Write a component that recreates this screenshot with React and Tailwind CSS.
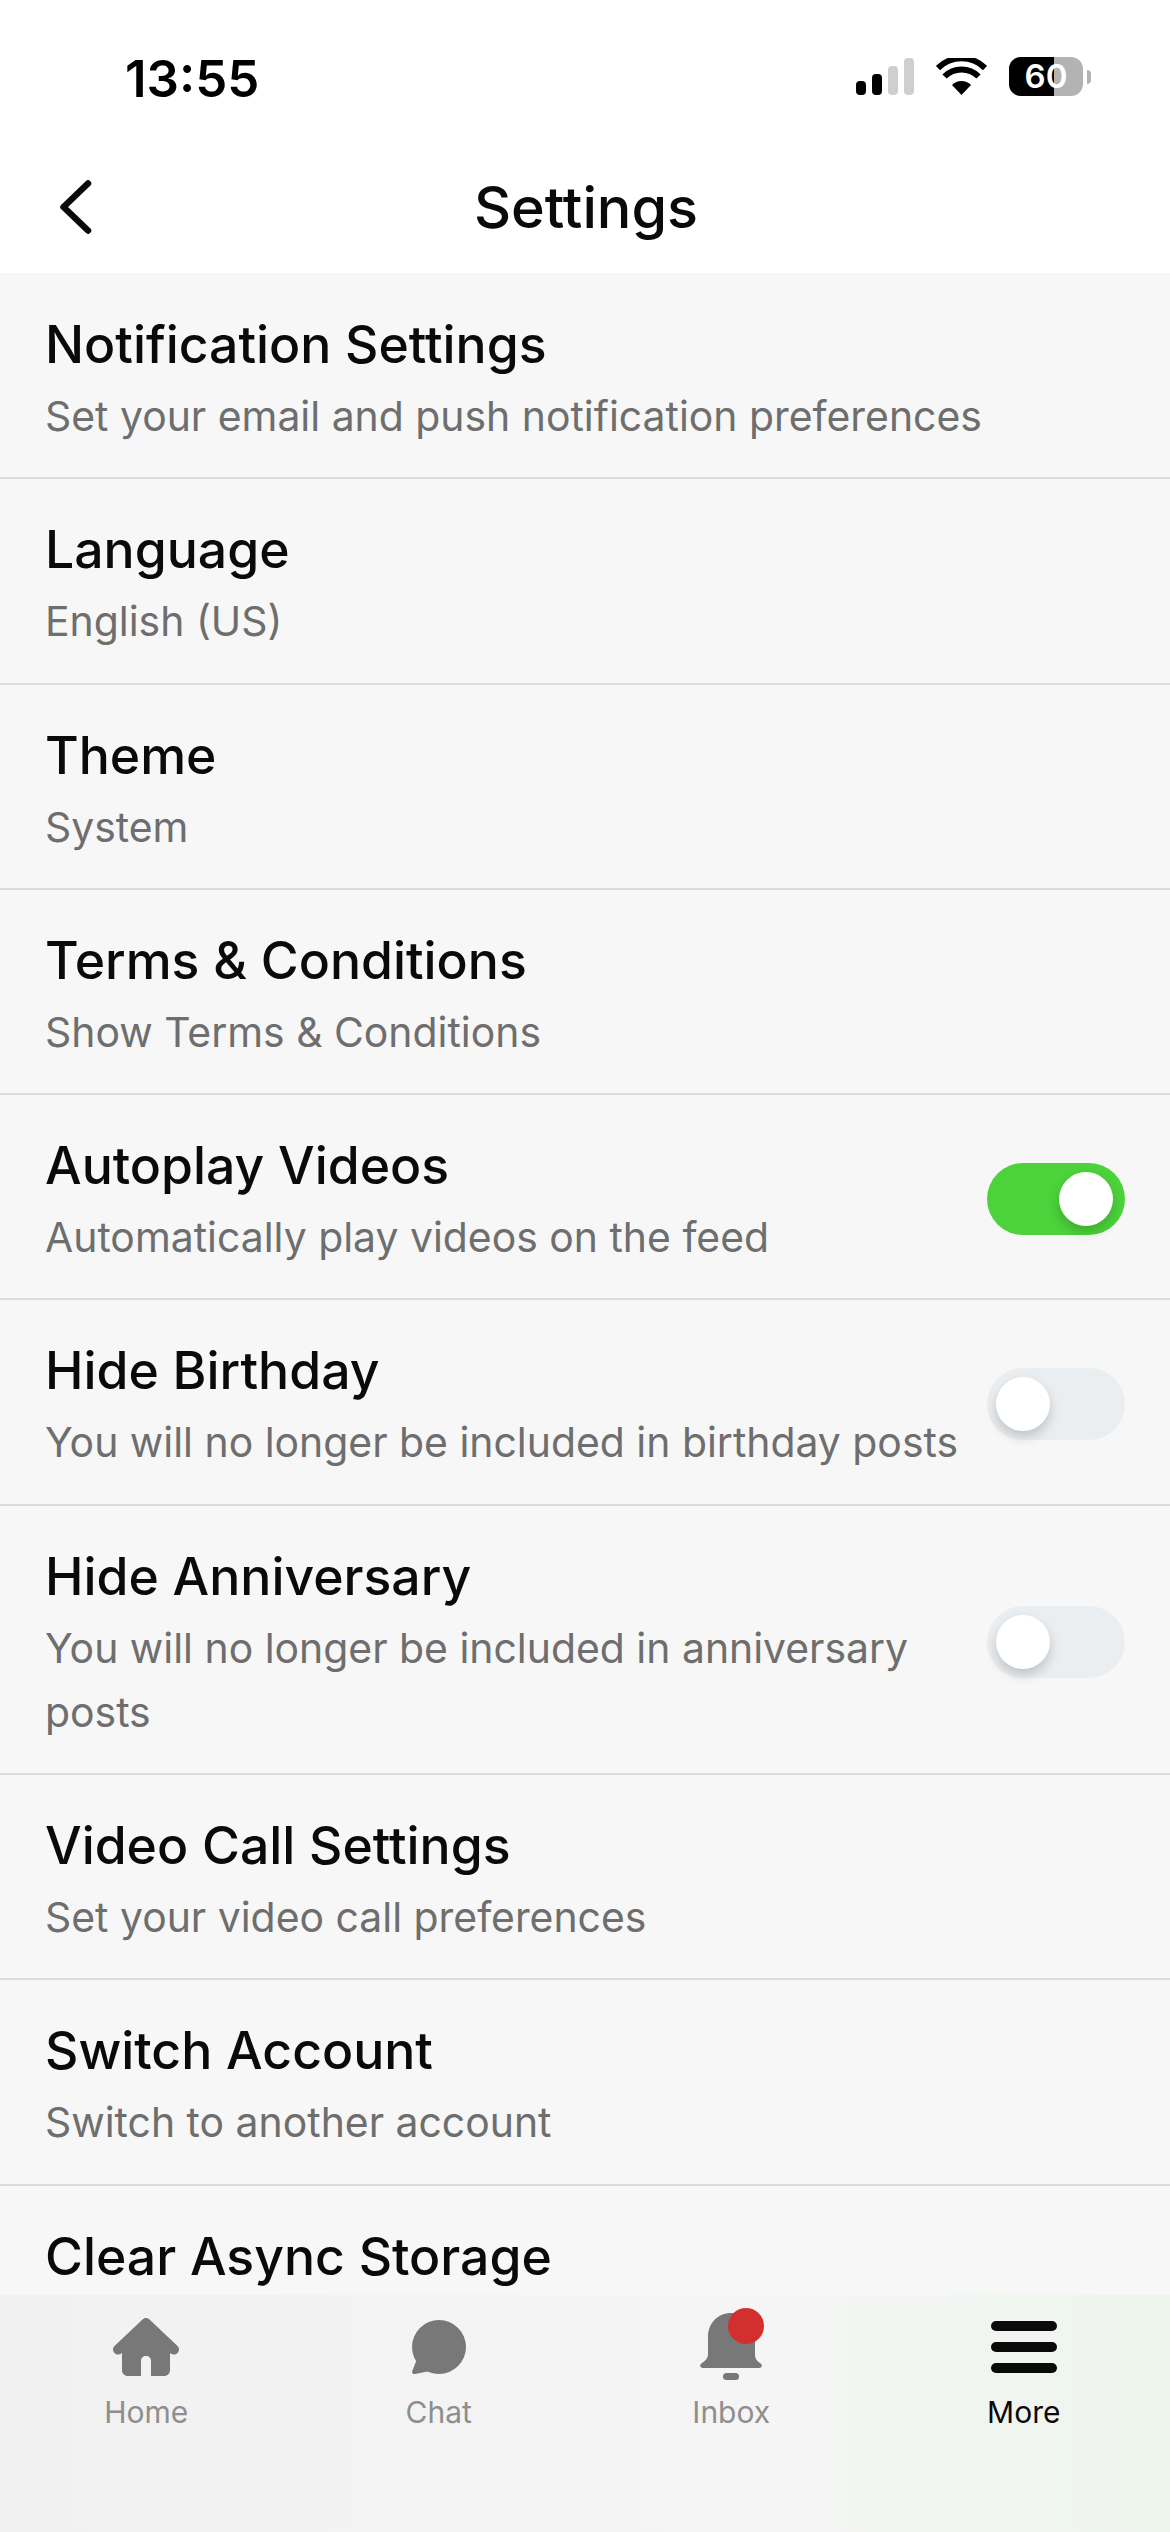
import React from "react";

const rows = [
  { title: "Notification Settings", sub: "Set your email and push notification preferences" },
  { title: "Language", sub: "English (US)" },
  { title: "Theme", sub: "System" },
  { title: "Terms & Conditions", sub: "Show Terms & Conditions" },
  { title: "Autoplay Videos", sub: "Automatically play videos on the feed", toggle: "on" },
  { title: "Hide Birthday", sub: "You will no longer be included in birthday posts", toggle: "off" },
  { title: "Hide Anniversary", sub: "You will no longer be included in anniversary posts", toggle: "off" },
  { title: "Video Call Settings", sub: "Set your video call preferences" },
  { title: "Switch Account", sub: "Switch to another account" },
  { title: "Clear Async Storage", sub: "Clear local storage" },
];

const Toggle = ({ on }) => (
  <div
    className={`flex h-[72px] w-[138px] shrink-0 items-center rounded-full ${
      on ? "justify-end bg-[#4cd23a] pr-[12px]" : "justify-start bg-[#ebeef0] pl-[9px]"
    }`}
  >
    <div className="h-[54px] w-[54px] rounded-full bg-white shadow-[0_6px_12px_rgba(0,0,0,0.18)]" />
  </div>
);

const StatusBar = () => (
  <div className="flex h-[148px] items-start justify-between pl-[125px] pr-[79px] pt-[49px]">
    <span className="text-[51px] font-semibold leading-[60px] text-black">13:55</span>
    <div className="flex items-center pt-[8px]">
      {/* signal */}
      <svg width="58" height="37" viewBox="0 0 58 37">
        <rect x="0" y="23" width="10" height="14" rx="4" fill="#000" />
        <rect x="16" y="16" width="10" height="21" rx="4" fill="#000" />
        <rect x="32" y="8" width="10" height="29" rx="4" fill="#cfcfcf" />
        <rect x="48" y="0" width="10" height="37" rx="4" fill="#cfcfcf" />
      </svg>
      {/* wifi */}
      <svg className="ml-[22px]" width="51" height="37" viewBox="0 0 51 37">
        <path d="M25.5 37 L16 27 A13.5 13.5 0 0 1 35 27 Z" fill="#000" />
        <path d="M8.5 18.5 A24 24 0 0 1 42.5 18.5" fill="none" stroke="#000" strokeWidth="6" />
        <path d="M2 10 A33.5 33.5 0 0 1 49 10" fill="none" stroke="#000" strokeWidth="6" />
      </svg>
      {/* battery */}
      <div className="relative ml-[22px] flex h-[39px] w-[74px] overflow-hidden rounded-[12px] bg-[#b3b3b3]">
        <div className="h-full w-[45px] bg-black" />
        <span className="absolute inset-0 text-center text-[33px] font-semibold leading-[39px] text-white">60</span>
      </div>
      <div className="ml-[4px] h-[14px] w-[4px] rounded-r-full bg-[#b3b3b3]" />
    </div>
  </div>
);

const Header = () => (
  <div className="relative flex h-[125px] items-start justify-center bg-white">
    <svg className="absolute left-[56px] top-[28px]" width="40" height="62" viewBox="0 0 40 62">
      <path d="M32 7.5 L7.5 31 L32 54.5" fill="none" stroke="#0a0a0a" strokeWidth="6.5" strokeLinecap="round" strokeLinejoin="round" />
    </svg>
    <span className="ml-[2px] mt-[27px] text-[57.5px] font-medium leading-[64px] text-[#0a0a0a]">Settings</span>
  </div>
);

const TabLabel = ({ active, className, children }) => (
  <span className={`text-[30px] leading-[34px] ${active ? "text-[#0a0a0a]" : "text-[#8e8e8e]"} ${className}`}>{children}</span>
);

const TabBar = () => (
  <div className="grid h-[237px] shrink-0 grid-cols-4 bg-gradient-to-r from-[#f1f1f1] via-[#f5f5f5] via-65% to-[#eef5ed]">
    <div className="flex flex-col items-center pt-[23px]">
      <svg width="66" height="58" viewBox="0 0 66 58">
        <path d="M33 0 C34.5 0 35.5 .6 36.5 1.6 L64.5 28 C66.5 30 66.5 33 64.5 35 C62.5 37 59.5 37 57 35 L57 52 C57 55.5 54.5 58 51 58 L38 58 L38 43 C38 40 36 38 33 38 C30 38 28 40 28 43 L28 58 L15 58 C11.5 58 9 55.5 9 52 L9 35 C6.5 37 3.5 37 1.5 35 C-.5 33 -.5 30 1.5 28 L29.5 1.6 C30.5 .6 31.5 0 33 0 Z" fill="#787878" />
      </svg>
      <TabLabel className="mt-[19px]">Home</TabLabel>
    </div>
    <div className="flex flex-col items-center pt-[25px]">
      <svg width="54" height="54" viewBox="0 0 54 54">
        <circle cx="27" cy="27" r="27" fill="#787878" />
        <path d="M5 39 L.3 51 C-.4 53 1 54.4 3 54 L18 51 Z" fill="#787878" />
      </svg>
      <TabLabel className="mt-[21px]">Chat</TabLabel>
    </div>
    <div className="flex flex-col items-center pt-[13px]">
      <div className="relative h-[72px] w-[62px]">
        <svg className="mt-[5px]" width="62" height="67" viewBox="0 0 62 67">
          <path d="M31 0 C18 0 8 10 8 24 L8 41 C8 45 6 47 2 50 C-1 52 0 55 3 55 L59 55 C62 55 63 52 60 50 C56 47 55 45 55 41 L55 24 C55 10 44 0 31 0 Z" fill="#787878" />
          <rect x="23" y="60" width="16" height="7" rx="3.5" fill="#787878" />
        </svg>
        {/* unread dot */}
        <div className="absolute left-[28px] top-0 h-[36px] w-[36px] rounded-full bg-[#d32f2f]" />
      </div>
      <TabLabel className="mt-[15px]">Inbox</TabLabel>
    </div>
    <div className="flex flex-col items-center pt-[26px]">
      <div className="flex w-[66px] flex-col gap-[11px]">
        <div className="h-[10px] rounded-full bg-[#0a0a0a]" />
        <div className="h-[10px] rounded-full bg-[#0a0a0a]" />
        <div className="h-[10px] rounded-full bg-[#0a0a0a]" />
      </div>
      <TabLabel active className="mt-[22px]">More</TabLabel>
    </div>
  </div>
);

const SettingRow = ({ row }) => (
  <div className="flex items-center justify-between gap-[20px] border-b-[2px] border-[#dcdcdc] pb-[29.3px] pl-[45px] pr-[45px] pt-[34px]">
    <div className="min-w-0 flex-1">
      <div className="text-[51.7px] font-medium leading-[72px] text-[#0a0a0a]">{row.title}</div>
      <div className="mt-[4px] text-[40.9px] leading-[64px] text-[#6e6e6e]">{row.sub}</div>
    </div>
    {row.toggle && <Toggle on={row.toggle === "on"} />}
  </div>
);

const App = () => {
  return (
    <div className="flex h-[2532px] w-[1170px] flex-col overflow-hidden bg-white font-['Inter',sans-serif]">
      <StatusBar />
      <Header />
      <div className="min-h-0 flex-1 overflow-hidden bg-[#f7f7f7] pt-[1px]">
        {rows.map((row) => (
          <SettingRow key={row.title} row={row} />
        ))}
      </div>
      <TabBar />
    </div>
  );
};

export default App;
